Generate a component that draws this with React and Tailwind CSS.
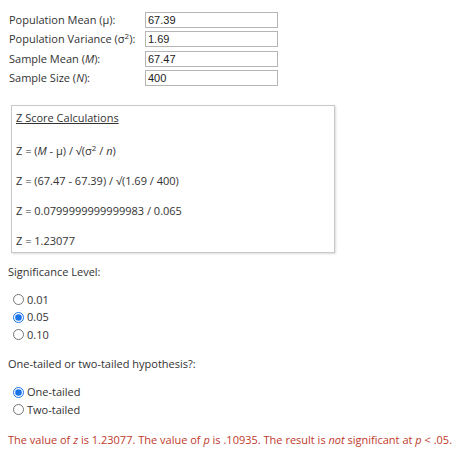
import React, { useState } from 'react'

const fields = [
    { label: <>Population Mean (μ):</>, value: '67.39' },
    { label: <>Population Variance (σ<sup className="text-[8px]">2</sup>):</>, value: '1.69' },
    { label: <>Sample Mean (<i>M</i>):</>, value: '67.47' },
    { label: <>Sample Size (<i>N</i>):</>, value: '400' },
]

const Radio = ({ name, checked, onChange, children }) => (
    <label className="flex items-center h-[17.5px] pl-[13px]">
        <input type="radio" name={name} checked={checked} onChange={onChange} className="w-[11px] h-[11px] m-0 mr-[3px] accent-[#1a73e8]" />
        <span>{children}</span>
    </label>
)

const App = () => {
    const [sig, setSig] = useState('0.05')
    const [tail, setTail] = useState('one')

    return (
        <div className="w-[474px] h-[455px] bg-white text-[#333] text-[11px] leading-[16px]" style={{ fontFamily: '"Open Sans", sans-serif' }}>
            <div className="pt-[10px] pl-[9px]">
                {fields.map((f, i) => (
                    <div key={i} className="flex items-center h-[19.5px]">
                        <div className="w-[136px] whitespace-nowrap">{f.label}</div>
                        <input
                            defaultValue={f.value}
                            className="w-[133px] h-[16px] border border-[#b5b5b5] px-[2px] text-[11px] text-[#222] outline-none"
                            style={{ fontFamily: '"Liberation Sans", Arial, sans-serif' }}
                        />
                    </div>
                ))}
            </div>

            <div className="ml-[11px] mt-[17px] w-[324px] h-[148px] border border-[#c8c8c8] shadow-[1px_1px_2px_rgba(0,0,0,0.15)] pl-[4px]">
                <div className="underline h-[24px] leading-[24px]">Z Score Calculations</div>
                <div className="mt-[9px] h-[30px] leading-[24px]">Z = (<i>M</i> - μ) / √(σ<sup className="text-[8px]">2</sup> / <i>n</i>)</div>
                <div className="h-[30px] leading-[24px]">Z = (67.47 - 67.39) / √(1.69 / 400)</div>
                <div className="h-[30px] leading-[24px]">Z = 0.0799999999999983 / 0.065</div>
                <div className="h-[30px] leading-[24px]">Z = 1.23077</div>
            </div>

            <div className="pl-[8px] mt-[11px]">Significance Level:</div>
            <div className="mt-[11px]">
                {['0.01', '0.05', '0.10'].map(v => (
                    <Radio key={v} name="sig" checked={sig === v} onChange={() => setSig(v)}>{v}</Radio>
                ))}
            </div>

            <div className="pl-[8px] mt-[12px]">One-tailed or two-tailed hypothesis?:</div>
            <div className="mt-[12px]">
                <Radio name="tail" checked={tail === 'one'} onChange={() => setTail('one')}>One-tailed</Radio>
                <Radio name="tail" checked={tail === 'two'} onChange={() => setTail('two')}>Two-tailed</Radio>
            </div>

            <div className="pl-[8px] mt-[13px] text-[#c0392b] whitespace-nowrap">
                The value of <i>z</i> is 1.23077. The value of <i>p</i> is .10935. The result is <i>not</i> significant at <i>p</i> &lt; .05.
            </div>
        </div>
    )
}

export default App
